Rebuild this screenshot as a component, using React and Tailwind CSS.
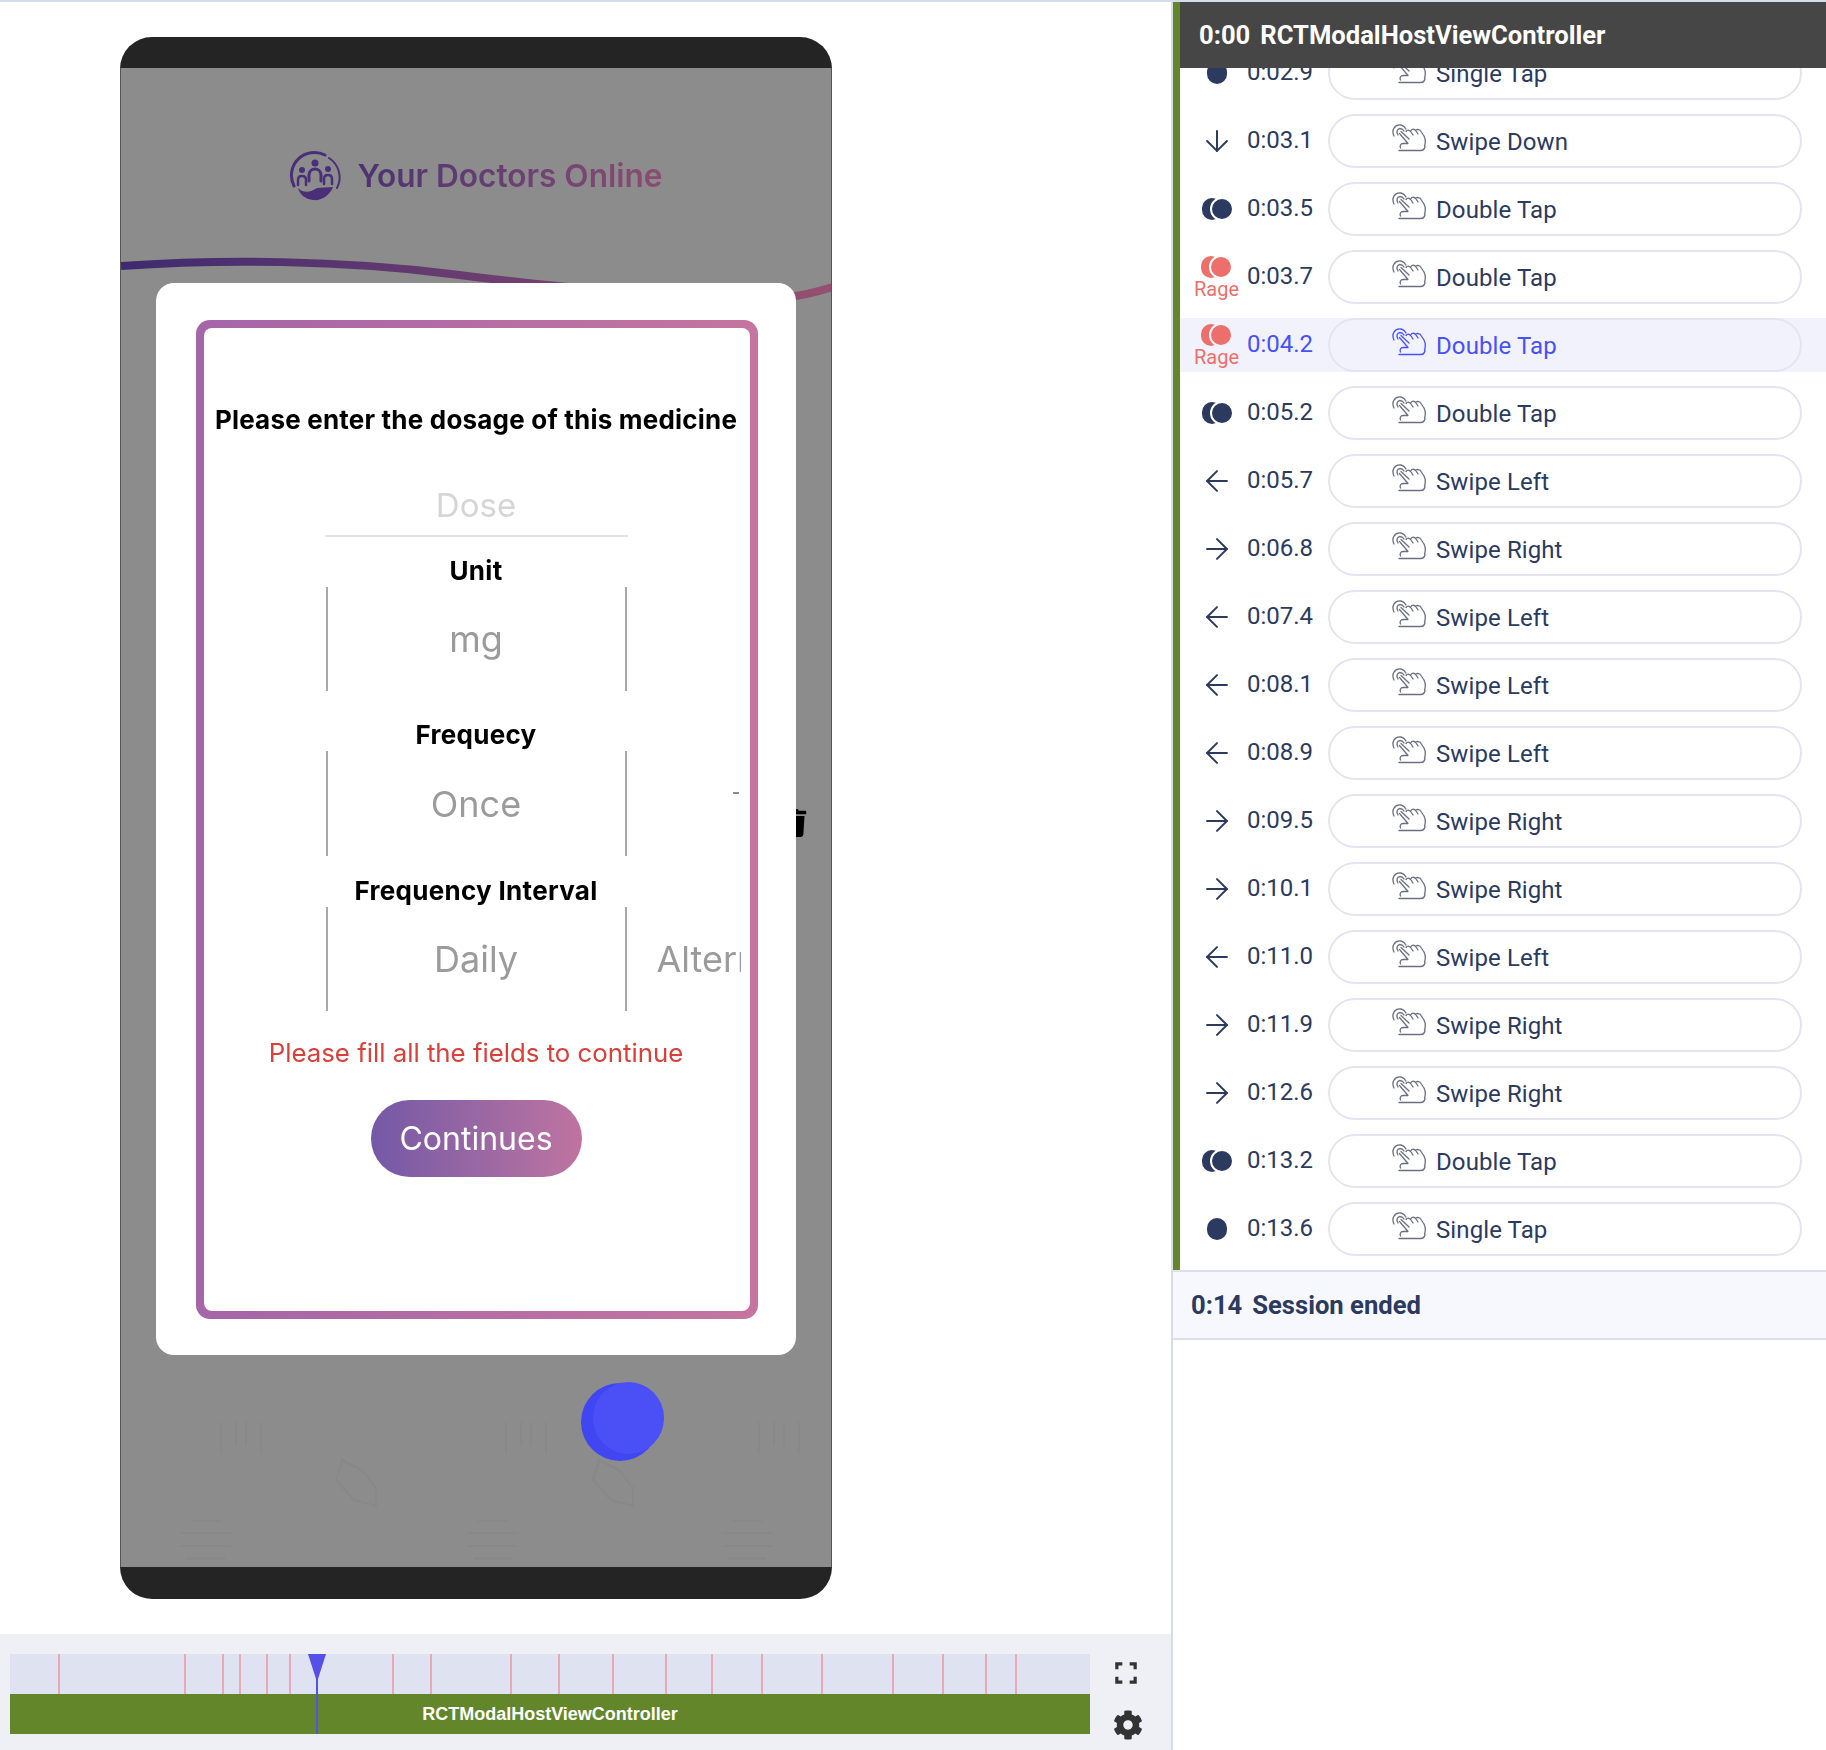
import React from "react";
import { FaCog, FaTrash } from "react-icons/fa";
import { ArrowDown, ArrowLeft, ArrowRight } from "lucide-react";

const rows = [
  { time: "0:02.9", name: "Single Tap", kind: "single" },
  { time: "0:03.1", name: "Swipe Down", kind: "down" },
  { time: "0:03.5", name: "Double Tap", kind: "double" },
  { time: "0:03.7", name: "Double Tap", kind: "rage" },
  { time: "0:04.2", name: "Double Tap", kind: "rage", active: true },
  { time: "0:05.2", name: "Double Tap", kind: "double" },
  { time: "0:05.7", name: "Swipe Left", kind: "left" },
  { time: "0:06.8", name: "Swipe Right", kind: "right" },
  { time: "0:07.4", name: "Swipe Left", kind: "left" },
  { time: "0:08.1", name: "Swipe Left", kind: "left" },
  { time: "0:08.9", name: "Swipe Left", kind: "left" },
  { time: "0:09.5", name: "Swipe Right", kind: "right" },
  { time: "0:10.1", name: "Swipe Right", kind: "right" },
  { time: "0:11.0", name: "Swipe Left", kind: "left" },
  { time: "0:11.9", name: "Swipe Right", kind: "right" },
  { time: "0:12.6", name: "Swipe Right", kind: "right" },
  { time: "0:13.2", name: "Double Tap", kind: "double" },
  { time: "0:13.6", name: "Single Tap", kind: "single" },
];

const markers = [48, 174, 212, 229, 256, 279, 382, 420, 500, 548, 602, 655, 701, 751, 811, 882, 932, 975, 1005];

const HandIcon = ({ className }) => (
  <svg viewBox="0 0 34 28" fill="none" stroke="currentColor" strokeWidth="1.3" strokeLinecap="round" strokeLinejoin="round" className={`w-[34px] h-[28px] ${className}`}>
    <path d="M2 12C-1 6 3 0 9 1C11 1.500 13 3 14 5" />
    <path d="M6 11C4 8 5 5 8 4.500C10 4.500 11 5.500 12 7" />
    <path d="M9 7.500L17 15" />
    <path d="M7.500 9.500L16 19.500H11C8.500 19.500 7.500 22 8.500 24" />
    <path d="M14 7.500C15.500 5.500 18 6 19 8L21 11" />
    <path d="M19 6.500C20.500 4.500 23 5 24 7L26 10" />
    <path d="M24 6C25.500 5 28 5.500 29 7.500L32 12C33.500 15 33.500 19 32.500 22" />
    <path d="M7 26.500H29C31 26.500 32.500 25 33 22.500" />
  </svg>
);

const Dot = ({ className }) => <div className={`w-[20px] h-[22px] rounded-full ${className}`} />;

const DoubleDot = ({ color, ring }) => (
  <div className="flex items-center ml-[2px]">
    <Dot className={color} />
    <div className={`w-[24px] h-[24px] rounded-full border-2 -ml-[12px] ${color} ${ring}`} />
  </div>
);

const GestureMark = ({ kind, active }) => {
  if (kind === "single") return <Dot className="bg-[#2b3a5e]" />;
  if (kind === "double") return <DoubleDot color="bg-[#2b3a5e]" ring="border-white" />;
  if (kind === "rage")
    return (
      <div className="flex flex-col items-center">
        <DoubleDot color="bg-[#ec6f6b]" ring={active ? "border-[#f2f2fd]" : "border-white"} />
        <span className="text-[20px] leading-[21px] text-[#ec6f6b]">Rage</span>
      </div>
    );
  const Arrow = kind === "down" ? ArrowDown : kind === "left" ? ArrowLeft : ArrowRight;
  return <Arrow size={34} strokeWidth={1.4} className="text-[#2b3a5e]" />;
};

const GestureRow = ({ row }) => (
  <div className={`flex items-center h-[54px] mb-[14px] pl-[6px] pr-[24px] ${row.active ? "bg-[#f2f2fd] text-[#4850f8]" : "text-[#2b3a5e]"}`}>
    <div className="w-[61px] flex justify-center">
      <GestureMark kind={row.kind} active={row.active} />
    </div>
    <div className="w-[81px] text-[24px] leading-none -mt-[3px]">{row.time}</div>
    <div className="flex-1 h-[54px] rounded-full border-2 border-[#e4e4f0] flex items-center pl-[62px] gap-[10px]">
      <HandIcon className={`-mt-[7px] ${row.active ? "text-[#4850f8]" : "text-[#6b7080]"}`} />
      <span className="text-[24px] tracking-[0.1px] mt-[2px]">{row.name}</span>
    </div>
  </div>
);

const FieldLabel = ({ height, children }) => (
  <div className={`${height} flex items-end justify-center text-[26px] leading-[32px] font-bold text-black tracking-[0.3px]`}>{children}</div>
);

const Picker = ({ height, children, side }) => (
  <div className={`relative w-[301px] ${height} border-x-2 border-[#a8a8a8] flex items-center justify-center text-[36px] text-[#9b9b9b]`}>
    {children}
    {side && (
      <div className="absolute left-[329px] w-[84px] overflow-hidden whitespace-nowrap">{side}</div>
    )}
  </div>
);

const Logo = () => (
  <svg viewBox="0 0 54 54" className="w-[54px] h-[54px] mt-[3px]" fill="none" stroke="#4a2f78" strokeLinecap="round">
    <path d="M5 36A23 23 0 0 1 36 5" strokeWidth="3" />
    <path d="M40 8A23 23 0 0 1 48 38" strokeWidth="2" />
    <path d="M9 38C15 44 22 42 28 38L44 37C40 47 31 51 24 50C16 49 11 45 9 38Z" fill="#4a2f78" stroke="none" />
    <circle cx="26" cy="13" r="3.500" fill="#4a2f78" stroke="none" />
    <path d="M20 31V25C20 21 23 19 26 19C29 19 32 21 32 25V31" strokeWidth="3" />
    <circle cx="13" cy="20" r="3" fill="#4a2f78" stroke="none" />
    <path d="M9 35V30C9 27 11 26 13 26C15 26 17 27 17 30V35" strokeWidth="2.500" />
    <circle cx="39" cy="19" r="3" fill="#4a2f78" stroke="none" />
    <path d="M35 34V29C35 26 37 25 39 25C41 25 43 26 43 29V34" strokeWidth="2.500" />
  </svg>
);

const Bracket = ({ className }) => (
  <div className={`absolute top-[1354px] w-[42px] h-[32px] border-x-2 border-[#888888] flex justify-center ${className}`}>
    <div className="w-[12px] h-[24px] border-x-2 border-[#888888]" />
  </div>
);

const TabGhost = ({ className }) => (
  <div className={`absolute top-[1452px] w-[50px] h-[40px] flex flex-col justify-between ${className}`}>
    <div className="mx-[10px] h-[2px] bg-[#888888]" />
    <div className="h-[2px] bg-[#888888]" />
    <div className="h-[2px] bg-[#888888]" />
    <div className="mx-[6px] h-[3px] bg-[#888888]" />
  </div>
);

const Pointer = ({ className }) => (
  <svg viewBox="0 0 46 50" fill="none" stroke="#888888" strokeWidth="2" className={`absolute top-[1390px] w-[46px] h-[50px] ${className}`}>
    <path d="M10 2L30 12L44 30V48L22 42L4 22Z" />
  </svg>
);

const PhoneBackground = () => (
  <>
    <div className="flex items-center justify-center gap-[14px] pt-[79px]">
      <Logo />
      <span className="text-[31.6px] font-semibold bg-gradient-to-r from-[#4b3272] to-[#8c4b72] bg-clip-text text-transparent">Your Doctors Online</span>
    </div>
    {/* header wave, mostly hidden by the modal */}
    <svg viewBox="0 0 712 80" className="absolute left-0 top-[170px] w-[712px] h-[80px]" fill="none">
      <defs>
        <linearGradient id="wave" x1="0" x2="1" y1="0" y2="0">
          <stop offset="0" stopColor="#3f2a6f" />
          <stop offset="1" stopColor="#96506f" />
        </linearGradient>
      </defs>
      <path d="M0 28C100 21 220 22 330 36S520 57 600 59S680 58 712 49" stroke="url(#wave)" strokeWidth="8" />
    </svg>
    <FaTrash className="absolute left-[659px] top-[741px] w-[28px] h-[28px] text-black" />
    {/* faint shapes of the dimmed screen underneath */}
    <Bracket className="left-[99px]" />
    <Bracket className="left-[384px]" />
    <Bracket className="left-[637px]" />
    <Pointer className="left-[211px]" />
    <Pointer className="left-[468px]" />
    <TabGhost className="left-[60px]" />
    <TabGhost className="left-[347px]" />
    <TabGhost className="left-[601px]" />
  </>
);

const DoseModal = () => (
  <div className="absolute left-[35px] top-[215px] w-[640px] h-[1072px] bg-white rounded-[18px] pt-[37px] pl-[40px] blur-[0.4px]">
    <div className="relative w-[562px] h-[999px] rounded-[14px] p-[8px] bg-gradient-to-r from-[#a565a8] to-[#c5759f]">
      <div className="h-full bg-white rounded-[8px] flex flex-col items-center pr-[2px]">
        <div className="mt-[75px] h-[34px] text-[26px] leading-[34px] font-bold text-black whitespace-nowrap tracking-[0.2px]">Please enter the dosage of this medicine</div>
        <div className="mt-[38px] h-[62px] w-[303px] border-b-2 border-[#e2e2e2] text-center text-[33px] leading-[60px] text-[#d6d6d6]">Dose</div>
        <FieldLabel height="h-[50px]">Unit</FieldLabel>
        <Picker height="h-[104px]">mg</Picker>
        <FieldLabel height="h-[60px]">Frequecy</FieldLabel>
        <Picker height="h-[105px]">Once</Picker>
        <FieldLabel height="h-[51px]">Frequency Interval</FieldLabel>
        <Picker height="h-[104px]" side="Alternate">Daily</Picker>
        <div className="mt-[24px] h-[36px] text-[25.8px] leading-[36px] text-[#d9403a] whitespace-nowrap">Please fill all the fields to continue</div>
        <div className="mt-[29px] w-[211px] h-[77px] rounded-full bg-gradient-to-r from-[#7458a6] to-[#bf749f] flex items-center justify-center text-[32px] text-white">Continues</div>
      </div>
      <div className="absolute left-[537px] top-[472px] w-[6px] h-[2px] bg-[#8a8a8a]" />
    </div>
  </div>
);

const Phone = () => (
  <div className="w-[712px] h-[1562px] flex flex-col rounded-[32px] overflow-hidden">
    <div className="h-[31px] bg-[#242424]" />
    <div className="relative flex-1 bg-[#8c8c8c] border-x border-[#555] overflow-hidden">
      <PhoneBackground />
      <DoseModal />
      {/* replayed touch */}
      <div className="absolute left-[460px] top-[1315px] w-[78px] h-[78px] rounded-full bg-[#3f46f2] blur-[0.5px]" />
      <div className="absolute left-[472px] top-[1314px] w-[71px] h-[72px] rounded-full bg-[#4a50f6] blur-[0.5px]" />
    </div>
    <div className="h-[32px] bg-[#242424]" />
  </div>
);

const Timeline = () => (
  <div className="h-[116px] bg-[#eff0f6] pt-[20px] pl-[10px] flex">
    <div className="relative w-[1080px] h-[80px]">
      <div className="h-[40px] bg-[#dfe3f1]" />
      <div className="h-[40px] bg-[#63862b] flex items-center justify-center text-[18px] font-bold text-white font-['Liberation_Sans',sans-serif]">RCTModalHostViewController</div>
      {markers.map((left) => (
        <div key={left} className="absolute top-0 h-[40px] w-[2px] bg-[#e8a8b4]" style={{ left }} />
      ))}
      <div className="absolute left-[306px] top-0 h-[80px] w-[2px] bg-[#4f55e8]" />
      <svg viewBox="0 0 18 28" className="absolute left-[298px] top-0 w-[18px] h-[28px]">
        <path d="M0 0H18L9 28Z" fill="#5450e8" />
      </svg>
    </div>
    <div className="flex flex-col items-center w-[74px] pl-[2px] text-[#333]">
      <svg viewBox="0 0 24 24" className="w-[22px] h-[22px] mt-[8px] -ml-[4px]" fill="none" stroke="currentColor" strokeWidth="3.500">
        <path d="M2 8V2H8M16 2H22V8M2 16V22H8M16 22H22V16" />
      </svg>
      <FaCog className="w-[30px] h-[30px] mt-[26px]" />
    </div>
  </div>
);

export default function App() {
  return (
    <div className="w-[1826px] h-[1750px] flex bg-white overflow-hidden font-['Roboto',sans-serif]">
      <div className="w-[1171px] flex flex-col border-t-2 border-[#d6dcec] font-['Inter',sans-serif]">
        <div className="flex-1 pt-[35px] pl-[120px]">
          <Phone />
        </div>
        <Timeline />
      </div>
      <div className="flex-1 flex flex-col border-l-2 border-t-2 border-[#d6dcec] min-w-0">
        <div className="border-l-[7px] border-[#63862b] h-[1268px] flex flex-col">
          <div className="relative z-10 h-[66px] shrink-0 bg-[#464646] flex items-center gap-[10px] pl-[19px] text-[25.6px] font-bold text-white">
            <span>0:00</span>
            <span>RCTModalHostViewController</span>
          </div>
          <div className="flex-1 overflow-hidden">
            <div className="-mt-[22px]">
              {rows.map((row) => (
                <GestureRow key={row.time} row={row} />
              ))}
            </div>
          </div>
        </div>
        <div className="h-[70px] bg-[#f7f8fd] border-y-2 border-[#dcdfec] flex items-center gap-[10px] pl-[18px] text-[25.6px] font-bold text-[#2b3a5e]">
          <span>0:14</span>
          <span>Session ended</span>
        </div>
      </div>
    </div>
  );
}
